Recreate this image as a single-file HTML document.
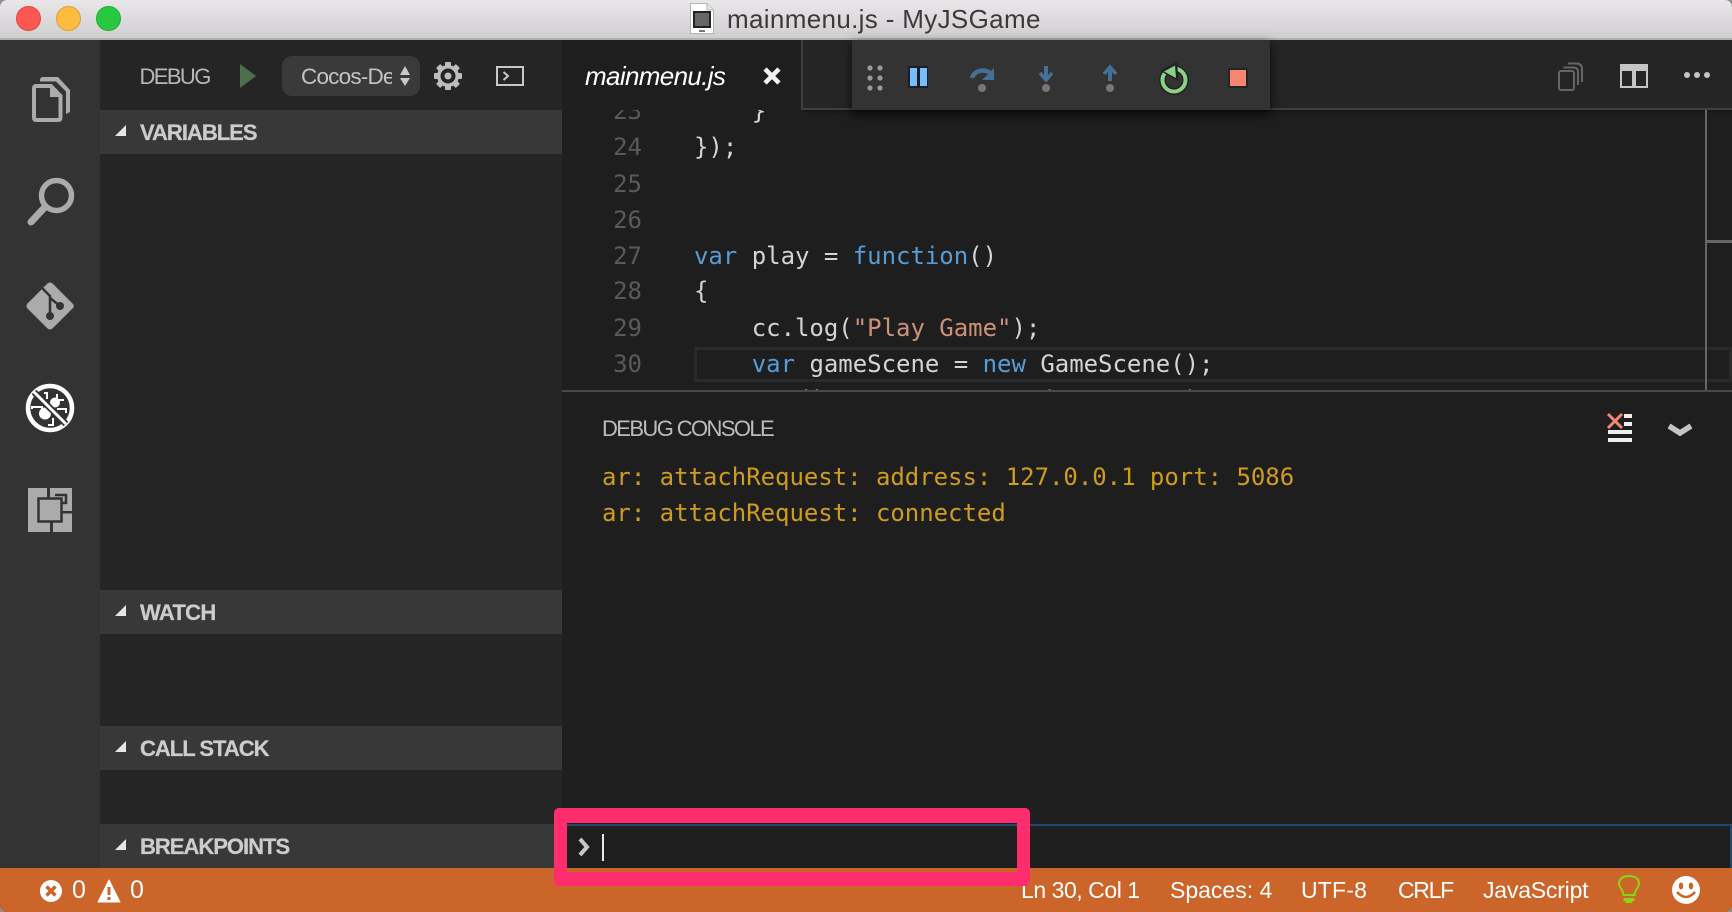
<!DOCTYPE html>
<html>
<head>
<meta charset="utf-8">
<title>mainmenu.js - MyJSGame</title>
<style>
html,body{margin:0;padding:0;background:#8f8f8f;}
#app{position:relative;width:1732px;height:912px;overflow:hidden;background:#1e1e1e;font-family:"Liberation Sans",sans-serif;border-radius:7px 7px 8px 8px;}
.a{position:absolute;white-space:pre;}
.box{position:absolute;}
.sec{position:absolute;left:100px;width:462px;height:44px;background:#383838;}
.sect{position:absolute;left:140px;font-weight:bold;font-size:22px;letter-spacing:-1px;color:#cccccc;line-height:45px;height:44px;-webkit-text-stroke:.25px #cccccc;}
.code{position:absolute;left:694px;font-family:"DejaVu Sans Mono","Liberation Mono",monospace;font-size:24px;line-height:36px;height:36px;color:#d4d4d4;white-space:pre;letter-spacing:-.02px;}
.ln{position:absolute;left:590px;width:52px;text-align:right;font-family:"DejaVu Sans Mono","Liberation Mono",monospace;font-size:24px;line-height:36px;height:36px;color:#5a5a5a;}
.k{color:#569cd6}.s{color:#ce9178}
.con{position:absolute;left:602px;font-family:"DejaVu Sans Mono","Liberation Mono",monospace;font-size:24px;line-height:36px;height:36px;color:#cf9c1e;white-space:pre;letter-spacing:-.03px;}
.st{position:absolute;top:868px;height:44px;line-height:44px;font-size:23px;color:#ffffff;white-space:pre;}
</style>
</head>
<body>
<div id="app">
  <!-- Title bar -->
  <div class="box" style="left:0;top:0;width:1732px;height:38px;background:linear-gradient(#e9e7e9,#d0ced0);"></div>
  <div class="box" style="left:0;top:38px;width:1732px;height:2px;background:#b1b0b1;"></div>
  <div class="box" style="left:16px;top:6px;width:23px;height:23px;border-radius:50%;background:#fc5753;border:1px solid #df4744;box-sizing:content-box;"></div>
  <div class="box" style="left:56px;top:6px;width:23px;height:23px;border-radius:50%;background:#fdbc40;border:1px solid #de9f34;"></div>
  <div class="box" style="left:96px;top:6px;width:23px;height:23px;border-radius:50%;background:#28c940;border:1px solid #27aa35;"></div>
  <svg class="box" style="left:688px;top:2px" width="28" height="34" viewBox="0 0 28 34">
    <path d="M2.500 1.500H19L25.500 8V31.500H2.500Z" fill="#ffffff" stroke="#b5b5b5" stroke-width="1"/>
    <path d="M19 1.500V8H25.500" fill="#e6e6e6" stroke="#b5b5b5" stroke-width="1"/>
    <rect x="5" y="9" width="18" height="17" fill="#222"/>
    <rect x="7" y="11" width="14" height="13" fill="#666"/>
    <rect x="11" y="28" width="6" height="2" fill="#777"/>
  </svg>
  <div class="a" style="left:727px;top:0;height:38px;line-height:38px;font-size:26px;letter-spacing:.34px;color:#3b3939;">mainmenu.js - MyJSGame</div>

  <!-- Activity bar -->
  <div class="box" style="left:0;top:40px;width:100px;height:828px;background:#333333;"></div>
  <!-- Sidebar -->
  <div class="box" style="left:100px;top:40px;width:462px;height:828px;background:#252526;"></div>
  <div class="a" style="left:139.500px;top:57px;height:40px;line-height:40px;font-size:22px;letter-spacing:-1.6px;color:#b8b8b8;">DEBUG</div>
  <svg class="box" style="left:238px;top:62px" width="20" height="28"><path d="M2 2L18 14L2 26Z" fill="#4c6e4d"/></svg>
  <div class="box" style="left:282px;top:56px;width:138px;height:40px;border-radius:10px;background:#3a3a3a;"></div>
  <div class="a" style="left:301px;top:57px;width:91px;overflow:hidden;height:40px;line-height:40px;font-size:22.500px;letter-spacing:-.8px;color:#c4c4c4;">Cocos-Debug</div>
  <svg class="box" style="left:397px;top:64px" width="16" height="24"><path d="M8 2L13 11H3Z M8 22L3 14H13Z" fill="#c8c8c8"/></svg>
  <svg class="box" style="left:432px;top:60px" width="32" height="32" viewBox="0 0 32 32">
    <g fill="#bdbdbd"><circle cx="16" cy="16" r="11"/>
    <g id="t"><rect x="13" y="2" width="6" height="28" rx="1"/></g>
    <rect x="13" y="2" width="6" height="28" rx="1" transform="rotate(45 16 16)"/>
    <rect x="13" y="2" width="6" height="28" rx="1" transform="rotate(90 16 16)"/>
    <rect x="13" y="2" width="6" height="28" rx="1" transform="rotate(135 16 16)"/></g>
    <circle cx="16" cy="16" r="7.500" fill="#252526"/><circle cx="16" cy="16" r="3.500" fill="#bdbdbd"/>
  </svg>
  <svg class="box" style="left:495px;top:65px" width="30" height="22"><rect x="2" y="2" width="26" height="18" fill="none" stroke="#c8c8c8" stroke-width="2"/><path d="M8.500 7L13 11L8.500 15" fill="none" stroke="#c8c8c8" stroke-width="2"/></svg>

  <div class="sec" style="top:110px"></div><div class="sect" style="top:110px">VARIABLES</div>
  <div class="sec" style="top:590px"></div><div class="sect" style="top:590px;letter-spacing:-.7px">WATCH</div>
  <div class="sec" style="top:726px"></div><div class="sect" style="top:726px">CALL STACK</div>
  <div class="sec" style="top:824px"></div><div class="sect" style="top:824px">BREAKPOINTS</div>
  <svg class="box" style="left:112px;top:120px" width="18" height="720">
    <path d="M14 5V16H3Z" fill="#e6e6e6"/>
    <path d="M14 485V496H3Z" fill="#e6e6e6"/>
    <path d="M14 621V632H3Z" fill="#e6e6e6"/>
  </svg>
  <svg class="box" style="left:112px;top:834px" width="18" height="24"><path d="M14 5V16H3Z" fill="#e6e6e6"/></svg>

  <!-- Activity icons -->
  <svg class="box" style="left:0;top:40px" width="100" height="520" viewBox="0 40 100 520">
    <!-- files -->
    <path d="M34 88.500Q34 86 36.500 86H51L60.500 96V117.500Q60.500 120 58 120H36.500Q34 120 34 117.500Z" fill="none" stroke="#ababab" stroke-width="4"/>
    <path d="M50 86V97H60.500Z" fill="#ababab"/>
    <path d="M40 80Q40 77 43 77H58L70 90V112L66 114V91.500L56 81.500H40Z" fill="#ababab"/>
    <!-- search -->
    <circle cx="56.500" cy="195.500" r="15" fill="none" stroke="#ababab" stroke-width="5.500"/>
    <path d="M45 207L31 222" fill="none" stroke="#ababab" stroke-width="7" stroke-linecap="round"/>
    <!-- git -->
    <path d="M47.500 283.500Q50 281.500 52.500 283.500L72.500 303.500Q75 306 72.500 308.500L52.500 328.500Q50 330.500 47.500 328.500L27.500 308.500Q25.500 306 27.500 303.500Z" fill="#ababab"/>
    <path d="M41 287L50 296V316M50 298L60 306" fill="none" stroke="#333" stroke-width="2.500"/>
    <circle cx="50" cy="316" r="4" fill="#333"/><circle cx="60" cy="306" r="4" fill="#333"/>
    <!-- debug -->
    <circle cx="50" cy="408" r="22" fill="none" stroke="#ffffff" stroke-width="4.500"/>
    <g fill="#ffffff">
      <circle cx="45" cy="413.500" r="6"/>
      <circle cx="55" cy="402.500" r="5"/>
    </g>
    <g fill="none" stroke="#ffffff" stroke-width="2">
      <path d="M44 393H47V399"/>
      <path d="M64 400H56M57 394V400"/>
      <path d="M66 413V409H57"/>
      <path d="M32 409V407H42V411"/>
      <path d="M48 425H53V418"/>
    </g>
    <path d="M34 392L66 424" stroke="#333" stroke-width="6.500"/>
    <path d="M34 392L66 424" stroke="#ffffff" stroke-width="3"/>
    <!-- extensions -->
    <rect x="28" y="488" width="44" height="44" fill="#ababab"/>
    <rect x="38.500" y="498.500" width="23" height="23" fill="none" stroke="#333" stroke-width="2.500"/>
    <rect x="47" y="488" width="3" height="10" fill="#333"/>
    <rect x="50" y="522" width="3" height="10" fill="#333"/>
    <rect x="62" y="511" width="10" height="2.500" fill="#333"/>
    <path d="M55 495H66V503H62" fill="none" stroke="#333" stroke-width="2.500"/>
  </svg>

  <!-- Tab bar -->
  <div class="box" style="left:562px;top:40px;width:1170px;height:70px;background:#252526;"></div>
  <div class="box" style="left:562px;top:40px;width:239px;height:70px;background:#1e1e1e;"></div>
  <div class="box" style="left:801px;top:40px;width:2px;height:70px;background:#404040;"></div>
  <div class="box" style="left:803px;top:108px;width:929px;height:2px;background:#404040;"></div>
  <div class="box" style="left:803px;top:110px;width:929px;height:4px;background:linear-gradient(#161616,#1e1e1e);"></div>
  <div class="a" style="left:585px;top:56px;height:40px;line-height:40px;font-size:26px;font-style:italic;letter-spacing:-.65px;color:#ffffff;">mainmenu.js</div>
  <svg class="box" style="left:762px;top:66px" width="20" height="20"><path d="M3 3L17 17M17 3L3 17" stroke="#f2f2f2" stroke-width="4.500" fill="none"/></svg>

  <!-- Right tab icons -->
  <svg class="box" style="left:1555px;top:60px" width="30" height="32">
    <rect x="4" y="11" width="15" height="19" rx="2" fill="none" stroke="#666" stroke-width="2"/>
    <path d="M8.500 7.500H18Q23 7.500 23 12V25" fill="none" stroke="#666" stroke-width="2"/>
    <path d="M13 3.500H21Q27 3.500 27 9V22" fill="none" stroke="#666" stroke-width="2"/>
  </svg>
  <svg class="box" style="left:1620px;top:64px" width="28" height="24"><rect width="28" height="24" fill="#c5c5c5"/><rect x="2" y="7" width="10" height="15" fill="#252526"/><rect x="16" y="7" width="10" height="15" fill="#252526"/></svg>
  <svg class="box" style="left:1680px;top:68px" width="34" height="14"><g fill="#c5c5c5"><circle cx="7" cy="7" r="3"/><circle cx="17" cy="7" r="3"/><circle cx="27" cy="7" r="3"/></g></svg>

  <!-- Editor lines -->
  <div style="position:absolute;left:562px;top:110px;width:1170px;height:280px;overflow:hidden;">
    <div style="position:absolute;left:132px;top:237px;width:1038px;height:35px;box-sizing:border-box;border:3px solid #2a2a2a;"></div>
    <div style="position:absolute;left:-562px;top:-110px;width:1732px;height:520px;">
      <div class="ln" style="top:93px">23</div><div class="code" style="top:93px">    }</div>
      <div class="ln" style="top:129px">24</div><div class="code" style="top:129px">});</div>
      <div class="ln" style="top:166px">25</div>
      <div class="ln" style="top:202px">26</div>
      <div class="ln" style="top:238px">27</div><div class="code" style="top:238px"><span class="k">var</span> play = <span class="k">function</span>()</div>
      <div class="ln" style="top:273px">28</div><div class="code" style="top:273px">{</div>
      <div class="ln" style="top:310px">29</div><div class="code" style="top:310px">    cc.log(<span class="s">"Play Game"</span>);</div>
      <div class="ln" style="top:346px">30</div><div class="code" style="top:346px">    <span class="k">var</span> gameScene = <span class="k">new</span> GameScene();</div>
      <div class="code" style="top:382px">    cc.director.runScene(gameScene);</div>
    </div>
    <div style="position:absolute;left:1143px;top:0;width:2px;height:280px;background:#666;"></div>
    <div style="position:absolute;left:1144px;top:130px;width:26px;height:3px;background:#666;"></div>
  </div>

  <!-- Panel -->
  <div class="box" style="left:562px;top:390px;width:1170px;height:2px;background:#484848;"></div>
  <div class="box" style="left:562px;top:392px;width:1170px;height:476px;background:#1e1e1e;"></div>
  <div class="a" style="left:602px;top:409px;height:40px;line-height:40px;font-size:22px;letter-spacing:-1.6px;color:#bcbcbc;">DEBUG CONSOLE</div>
  <svg class="box" style="left:1604px;top:410px" width="32" height="36">
    <g fill="#eeeeee"><rect x="4" y="4" width="24" height="4"/><rect x="4" y="12" width="24" height="4"/><rect x="4" y="20" width="24" height="4"/><rect x="4" y="28" width="24" height="4"/></g>
    <rect x="0" y="2" width="20" height="17" fill="#1e1e1e"/>
    <path d="M4 4L18 18M18 4L4 18" stroke="#f48771" stroke-width="3" fill="none"/>
  </svg>
  <svg class="box" style="left:1664px;top:420px" width="32" height="20"><path d="M5 6L16 13L27 6" fill="none" stroke="#c5c5c5" stroke-width="5.500"/></svg>
  <div class="con" style="top:459px">ar: attachRequest: address: 127.0.0.1 port: 5086</div>
  <div class="con" style="top:495px">ar: attachRequest: connected</div>

  <!-- Input -->
  <div class="box" style="left:562px;top:824px;width:1170px;height:44px;box-sizing:border-box;border-top:2px solid #1c4a70;border-right:2px solid #1c4a70;background:#1e1e1e;"></div>
  <svg class="box" style="left:576px;top:836px" width="16" height="22"><path d="M4 3L11 11L4 19" fill="none" stroke="#c8c8c8" stroke-width="4"/></svg>
  <div class="box" style="left:602px;top:834px;width:2px;height:27px;background:#e8e8e8;"></div>

  <!-- Status bar -->
  <div class="box" style="left:0;top:868px;width:1732px;height:44px;background:#cc6529;"></div>
  <svg class="box" style="left:38px;top:878px" width="26" height="26"><circle cx="13" cy="13" r="11" fill="#fff"/><path d="M8.500 8.500L17.500 17.500M17.500 8.500L8.500 17.500" stroke="#cc6529" stroke-width="3.500"/></svg>
  <div class="st" style="left:72px;font-size:25px;">0</div>
  <svg class="box" style="left:96px;top:878px" width="26" height="26"><path d="M13 2L24 24H2Z" fill="#fff" stroke="#fff" stroke-linejoin="round" stroke-width="1"/><rect x="11.500" y="9" width="3" height="8" fill="#cc6529"/><rect x="11.500" y="19" width="3" height="3" fill="#cc6529"/></svg>
  <div class="st" style="left:130px;font-size:25px;">0</div>
  <div class="st" style="left:1021px;letter-spacing:-.45px;">Ln 30, Col 1</div>
  <div class="st" style="left:1170px;">Spaces: 4</div>
  <div class="st" style="left:1301px;letter-spacing:.2px;">UTF-8</div>
  <div class="st" style="left:1398px;letter-spacing:-1.3px;">CRLF</div>
  <div class="st" style="left:1483px;letter-spacing:-.2px;">JavaScript</div>
  <svg class="box" style="left:1615px;top:873px" width="28" height="32">
    <path d="M8.500 22C8.500 17 4 15 4 10.500C4 5.500 8.500 3 14 3C19.500 3 24 5.500 24 10.500C24 15 19.500 17 19.500 22Z" fill="none" stroke="#89d510" stroke-width="2"/>
    <rect x="8.500" y="25" width="11" height="3" fill="#89d510"/><rect x="10.500" y="28" width="7" height="2" fill="#89d510"/>
  </svg>
  <svg class="box" style="left:1670px;top:874px" width="32" height="32"><circle cx="16" cy="16" r="14" fill="#fff"/><ellipse cx="11" cy="12" rx="2.200" ry="3.500" fill="#cc6529"/><ellipse cx="21" cy="12" rx="2.200" ry="3.500" fill="#cc6529"/><path d="M7 18Q16 28 25 18" fill="none" stroke="#cc6529" stroke-width="2.500"/></svg>

  <!-- Debug toolbar -->
  <div class="box" style="left:852px;top:40px;width:418px;height:70px;background:#333333;box-shadow:0 4px 10px rgba(0,0,0,.75);"></div>
  <svg class="box" style="left:852px;top:40px" width="418" height="70" viewBox="852 40 418 70">
    <g fill="#9a9a9a"><circle cx="870" cy="68" r="2.600"/><circle cx="880" cy="68" r="2.600"/><circle cx="870" cy="78" r="2.600"/><circle cx="880" cy="78" r="2.600"/><circle cx="870" cy="88" r="2.600"/><circle cx="880" cy="88" r="2.600"/></g>
    <rect x="908" y="66" width="20" height="22" fill="#1e1e1e"/>
    <rect x="910" y="68" width="7" height="18" fill="#75beff"/><rect x="920" y="68" width="7" height="18" fill="#75beff"/>
    <!-- step over -->
    <path d="M972 78C974 70 987 67 993 76" fill="none" stroke="#456f96" stroke-width="4.500"/>
    <path d="M994 68V80H982Z" fill="#456f96"/>
    <circle cx="982" cy="88" r="4" fill="#777"/>
    <!-- step into -->
    <path d="M1046 66V78" stroke="#456f96" stroke-width="4"/><path d="M1040 73L1046 80L1052 73" fill="none" stroke="#456f96" stroke-width="3.500"/>
    <circle cx="1046" cy="88" r="4" fill="#777"/>
    <!-- step out -->
    <path d="M1110 70V81" stroke="#456f96" stroke-width="4"/><path d="M1104 74L1110 67L1116 74" fill="none" stroke="#456f96" stroke-width="3.500"/>
    <circle cx="1110" cy="88" r="4" fill="#777"/>
    <!-- restart -->
    <circle cx="1174" cy="80" r="11.500" fill="none" stroke="#222" stroke-width="7"/>
    <circle cx="1174" cy="80" r="11.500" fill="none" stroke="#89d185" stroke-width="4"/>
    <path d="M1176 64L1163 71L1177 79Z" fill="#222" stroke="#222" stroke-width="2.500"/>
    <path d="M1175 65.500L1164 71.500L1176 78Z" fill="#89d185"/>
    <!-- stop -->
    <rect x="1228" y="68" width="20" height="20" fill="#252525"/>
    <rect x="1230" y="70" width="16" height="16" fill="#f48771"/>
  </svg>

  <!-- Pink annotation -->
  <div class="box" style="left:554px;top:808px;width:476px;height:78px;box-sizing:border-box;border:solid #fe2e6e;border-width:15px 13.500px 14.500px 13.500px;border-radius:5px;"></div>
</div>
</body>
</html>
